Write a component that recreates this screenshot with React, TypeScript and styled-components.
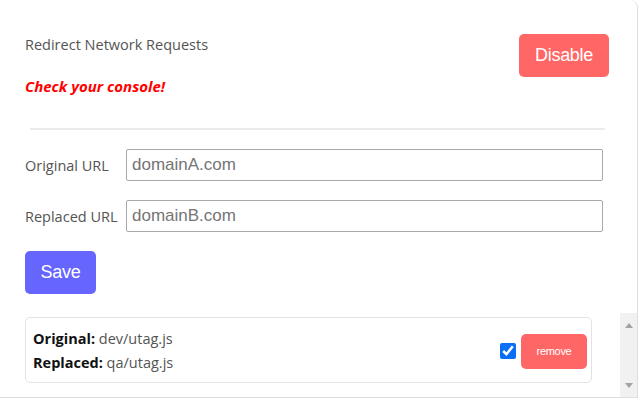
import React from "react";
import styled, { createGlobalStyle } from "styled-components";

const GlobalStyle = createGlobalStyle`
  html, body { margin: 0; padding: 0; background: #fff; }
  body { font-family: "Open Sans", "Noto Sans", sans-serif; }
  * { box-sizing: border-box; }
`;

const Frame = styled.div`
  width: 638px;
  height: 398px;
  border-right: 1px solid #dedede;
  border-bottom: 1px solid #dedede;
  border-top-right-radius: 8px;
  display: flex;
  flex-direction: column;
  overflow: hidden;
`;

const Top = styled.div`
  padding: 34px 28px 0 25px;
  display: flex;
  flex-direction: column;
`;

const Header = styled.div`
  display: flex;
  justify-content: space-between;
  align-items: flex-start;
`;

const TitleCol = styled.div`
  display: flex;
  flex-direction: column;
  gap: 21px;
  padding-top: 1px;
`;

const Title = styled.div`
  font-size: 14.5px;
  line-height: 20px;
  color: #545454;
`;

const Warning = styled.div`
  font-size: 15px;
  line-height: 20px;
  font-weight: 700;
  font-style: italic;
  color: #f00;
`;

const Button = styled.button<{ $bg: string; $w: number; $h: number; $fs: number }>`
  width: ${(p) => p.$w}px;
  height: ${(p) => p.$h}px;
  background: ${(p) => p.$bg};
  color: #fff;
  border: none;
  border-radius: 5px;
  font-family: "Liberation Sans", Arial, sans-serif;
  font-size: ${(p) => p.$fs}px;
  letter-spacing: -0.3px;
  padding: 0;
  flex-shrink: 0;
  cursor: pointer;
`;

const Divider = styled.hr`
  margin: 32px 4px 0 5px;
  border: none;
  height: 2px;
  background: #ebebeb;
`;

const Row = styled.div<{ $mt: number }>`
  display: flex;
  align-items: center;
  margin-top: ${(p) => p.$mt}px;
  padding-right: 6px;
`;

const Label = styled.label`
  width: 101px;
  flex-shrink: 0;
  white-space: nowrap;
  font-size: 14.5px;
  color: #545454;
`;

const Input = styled.input`
  flex: 1;
  min-width: 0;
  height: 32px;
  border: 1px solid #a9a9a9;
  border-radius: 2px;
  padding: 0 5px;
  font-family: "Liberation Sans", Arial, sans-serif;
  font-size: 17px;
  color: #333;
  outline: none;
  &::placeholder { color: #757575; }
`;

const SaveWrap = styled.div`
  margin-top: 19px;
`;

const ListArea = styled.div`
  margin-top: 19px;
  flex: 1;
  display: flex;
  min-height: 0;
`;

const List = styled.div`
  flex: 1;
  padding: 4px 28px 0 25px;
  overflow: hidden;
`;

const Rail = styled.div`
  width: 17px;
  flex-shrink: 0;
  background: #f1f1f1;
  display: flex;
  flex-direction: column;
  justify-content: space-between;
  align-items: center;
  padding: 10px 0 9px;
`;

const Card = styled.div`
  border: 1px solid #e3e3e3;
  border-radius: 5px;
  padding: 9px 4px 7px 7px;
  display: flex;
  justify-content: space-between;
  align-items: center;
`;

const Lines = styled.div`
  display: flex;
  flex-direction: column;
  font-size: 14.5px;
  line-height: 24px;
  color: #545454;
  b { color: #111; font-weight: 700; }
`;

const Actions = styled.div`
  display: flex;
  align-items: center;
  gap: 5px;
`;

const Check = styled.input`
  width: 16px;
  height: 16px;
  margin: 0;
  accent-color: #0b6ff5;
`;

const Arrow = ({ down }: { down?: boolean }) => (
  <svg width="8" height="5" viewBox="0 0 8 5">
    <path d={down ? "M0 0 H8 L4 5 Z" : "M0 5 H8 L4 0 Z"} fill="#a3a3a3" />
  </svg>
);

export default function App() {
  return (
    <>
      <GlobalStyle />
      <Frame>
        <Top>
          <Header>
            <TitleCol>
              <Title>Redirect Network Requests</Title>
              <Warning>Check your console!</Warning>
            </TitleCol>
            <Button $bg="#ff6666" $w={90} $h={43} $fs={18}>Disable</Button>
          </Header>
          <Divider />
          <Row $mt={19}>
            <Label>Original URL</Label>
            <Input placeholder="domainA.com" />
          </Row>
          <Row $mt={19}>
            <Label>Replaced URL</Label>
            <Input placeholder="domainB.com" />
          </Row>
          <SaveWrap>
            <Button $bg="#6666ff" $w={71} $h={43} $fs={18}>Save</Button>
          </SaveWrap>
        </Top>
        <ListArea>
          <List>
            <Card>
              <Lines>
                <span><b>Original:</b> dev/utag.js</span>
                <span><b>Replaced:</b> qa/utag.js</span>
              </Lines>
              <Actions>
                <Check type="checkbox" defaultChecked />
                <Button $bg="#ff6666" $w={66} $h={35} $fs={11}>remove</Button>
              </Actions>
            </Card>
          </List>
          <Rail>
            <Arrow />
            <Arrow down />
          </Rail>
        </ListArea>
      </Frame>
    </>
  );
}
